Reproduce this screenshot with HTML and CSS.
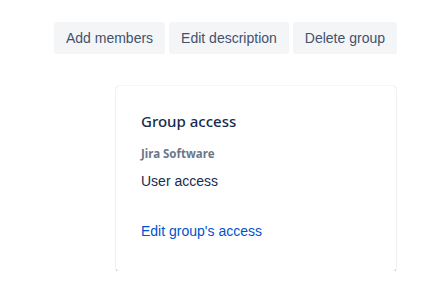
FILE: index.html
```html
<!DOCTYPE html>
<html lang="en">
<head>
    <meta charset="UTF-8">
    <title>Group</title>
    <link rel="stylesheet" href="styles.css">
</head>
<body>
    <div class="page">
        <div class="actions">
            <button class="action-button">Add members</button>
            <button class="action-button">Edit description</button>
            <button class="action-button">Delete group</button>
        </div>

        <div class="access-card">
            <h3 class="card-title">Group access</h3>
            <div class="product-name">Jira Software</div>
            <div class="access-role">User access</div>
            <a href="#" class="edit-link">Edit group's access</a>
        </div>
    </div>
</body>
</html>
```

FILE: styles.css
```css
body {
    margin: 0;
    background: #ffffff;
    font-family: 'Liberation Sans', Arial, sans-serif;
    color: #172b4d;
}

.page {
    display: flex;
    flex-direction: column;
    align-items: flex-end;
    padding: 22px 27px 0 0;
}

.actions {
    display: flex;
    gap: 4px;
}

.action-button {
    height: 32px;
    padding: 0 12px;
    border: none;
    border-radius: 3px;
    background-color: #f4f5f7;
    color: #42526e;
    font-family: 'Liberation Sans', Arial, sans-serif;
    font-size: 14px;
}

.access-card {
    width: 280px;
    height: 185px;
    box-sizing: border-box;
    margin-top: 32px;
    margin-right: 1px;
    padding: 25px 25px;
    border-radius: 3px;
    background: #ffffff;
    box-shadow: 0 1px 1px rgba(9, 30, 66, 0.25), 0 0 1px rgba(9, 30, 66, 0.31);
}

.card-title {
    margin: 0;
    font-family: 'Noto Sans', sans-serif;
    font-size: 15px;
    font-weight: 500;
    line-height: 20px;
    color: #172b4d;
}

.product-name {
    margin-top: 15px;
    font-family: 'Noto Sans', sans-serif;
    font-size: 11.5px;
    font-weight: 700;
    line-height: 16px;
    color: #6b778c;
}

.access-role {
    margin-top: 9px;
    font-size: 14px;
    line-height: 20px;
}

.edit-link {
    display: block;
    margin-top: 30px;
    font-size: 14px;
    line-height: 20px;
    color: #0052cc;
    text-decoration: none;
}
```
